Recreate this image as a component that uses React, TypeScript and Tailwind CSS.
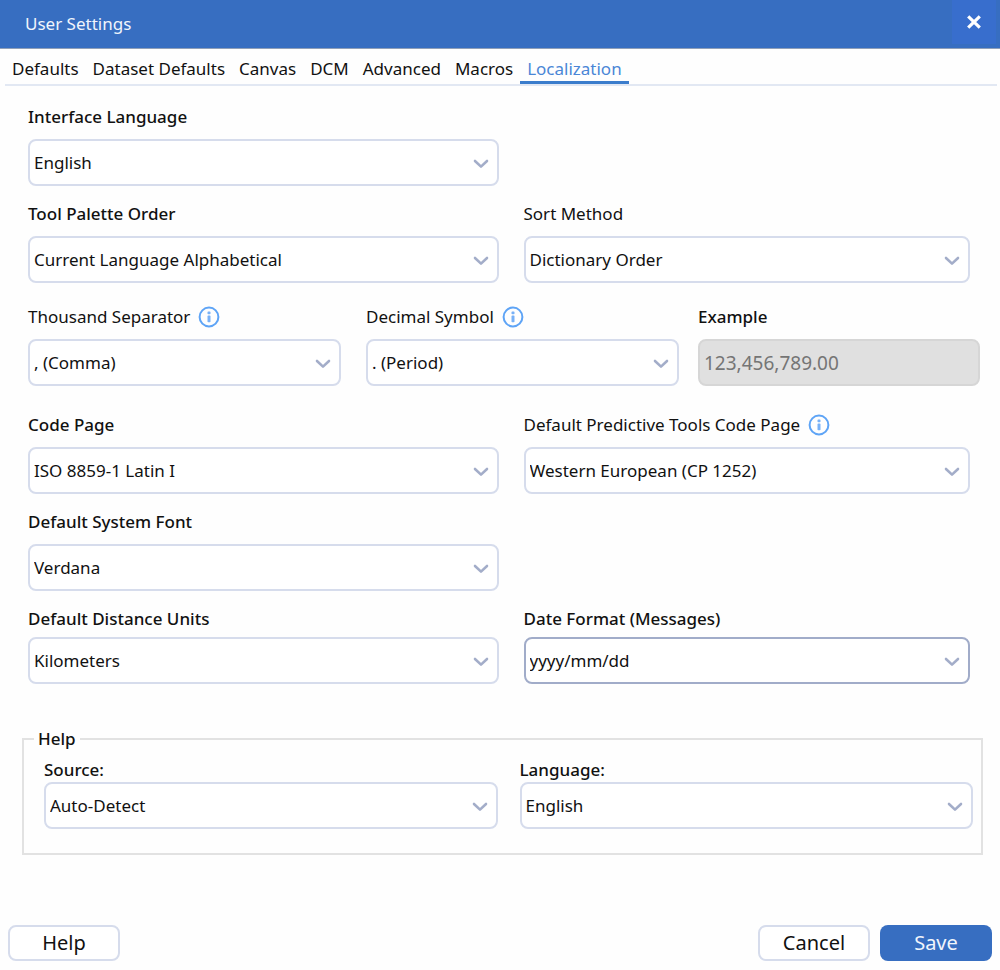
import React, { useId, useState } from "react";

const tabs = ["Defaults", "Dataset Defaults", "Canvas", "DCM", "Advanced", "Macros", "Localization"];

const InfoIcon = () => (
  <svg viewBox="0 0 22 22" className="h-[22px] w-[22px] shrink-0" fill="none" aria-hidden="true">
    <circle cx="11" cy="11" r="9.4" stroke="#5ea4f6" strokeWidth="2" />
    <rect x="9.5" y="5.6" width="3" height="2.6" rx="0.8" fill="#78b1f7" />
    <rect x="9.5" y="9.6" width="3" height="6.6" rx="0.8" fill="#78b1f7" />
  </svg>
);

const Chevron = () => (
  <svg
    viewBox="0 0 16 10"
    className="pointer-events-none absolute top-[20px] right-[10px] h-[10px] w-4"
    fill="none"
    aria-hidden="true"
  >
    <path d="M2 2 L8 7.6 L14 2" stroke="#a3adc9" strokeWidth="2.6" strokeLinecap="round" strokeLinejoin="round" />
  </svg>
);

type SelectFieldProps = {
  label: string;
  options: string[];
  info?: boolean;
  active?: boolean;
  medium?: boolean;
  gap?: string;
  className?: string;
};

const SelectField = ({ label, options, info, active, medium, gap = "gap-[10px]", className = "" }: SelectFieldProps) => {
  const id = useId();
  const [value, setValue] = useState(options[0]);

  return (
    <div className={`flex min-w-0 flex-col ${gap} ${className}`}>
      <div className="flex h-6 items-center gap-2">
        <label htmlFor={id} className={medium ? "font-medium" : ""}>
          {label}
        </label>
        {info && <InfoIcon />}
      </div>
      <div className="relative">
        <select
          id={id}
          value={value}
          onChange={(e) => setValue(e.target.value)}
          className={`h-[47px] w-full appearance-none rounded-lg border-2 bg-white pr-9 pl-1 ${
            active ? "border-[#a1acc9]" : "border-[#d6dcec]"
          }`}
        >
          {options.map((option) => (
            <option key={option}>{option}</option>
          ))}
        </select>
        <Chevron />
      </div>
    </div>
  );
};

const App = () => {
  const [activeTab, setActiveTab] = useState("Localization");

  return (
    <div className="flex min-h-screen flex-col bg-[#fefefe] font-['Noto_Sans',sans-serif] text-[17px] leading-6 text-[#111111]">
      {/* Title bar */}
      <header className="flex h-[49px] items-start justify-between border-b border-[#8f9fb8] bg-[#376ec1] pl-[25px] text-[#f0f5fc]">
        <h1 className="pt-3">User Settings</h1>
        <button type="button" aria-label="Close" className="mr-1 flex h-11 w-11 items-center justify-center bg-[#386ecd]">
          <svg viewBox="0 0 16 14" className="h-[14px] w-4" fill="none" aria-hidden="true">
            <path d="M2.2 1.4 L13.8 12.6 M13.8 1.4 L2.2 12.6" stroke="#ffffff" strokeWidth="3.2" />
          </svg>
        </button>
      </header>

      {/* Tabs */}
      <nav role="tablist" className="mr-[3px] ml-[5px] flex h-[37px] items-end border-b-2 border-[#e2e8f3]">
        {tabs.map((tab) => (
          <button
            key={tab}
            type="button"
            role="tab"
            aria-selected={tab === activeTab}
            onClick={() => setActiveTab(tab)}
            className={`h-[29px] border-b-[3px] px-[7px] pt-[2px] whitespace-nowrap ${
              tab === activeTab ? "border-[#3b7dcc] text-[#4a86d6]" : "border-transparent"
            }`}
          >
            {tab}
          </button>
        ))}
      </nav>

      <main className="flex-1 pt-[19px] pr-5 pl-[28px]">
        <div className="grid grid-cols-[470fr_446fr] gap-x-[25px] gap-y-4 pr-[10px]">
          <SelectField label="Interface Language" options={["English", "French", "German"]} medium />
          <div />
          <SelectField label="Tool Palette Order" options={["Current Language Alphabetical", "English Alphabetical"]} medium />
          <SelectField label="Sort Method" options={["Dictionary Order", "Unicode Order"]} />
        </div>

        <div className="mt-[22px] flex">
          <SelectField className="flex-[313]" label="Thousand Separator" options={[", (Comma)", ". (Period)", "(Space)"]} info />
          <SelectField className="ml-[25px] flex-[313]" label="Decimal Symbol" options={[". (Period)", ", (Comma)"]} info />
          <div className="ml-[19px] flex min-w-0 flex-[282] flex-col gap-[10px]">
            <label htmlFor="example" className="h-6 font-medium">
              Example
            </label>
            <input
              id="example"
              value="123,456,789.00"
              disabled
              className="h-[47px] w-full rounded-lg border-2 border-[#d6d6d6] bg-[#e0e0e0] pl-1 text-[19px] text-[#757575]"
            />
          </div>
        </div>

        <div className="mt-[27px] grid grid-cols-[470fr_446fr] gap-x-[25px] gap-y-4 pr-[10px]">
          <SelectField label="Code Page" options={["ISO 8859-1 Latin I", "Unicode UTF-8"]} medium />
          <SelectField label="Default Predictive Tools Code Page" options={["Western European (CP 1252)"]} info />
          <SelectField label="Default System Font" options={["Verdana", "Arial", "Tahoma"]} medium />
          <div />
          <SelectField label="Default Distance Units" options={["Kilometers", "Miles"]} medium gap="gap-[6px]" />
          <SelectField label="Date Format (Messages)" options={["yyyy/mm/dd", "mm/dd/yyyy"]} medium gap="gap-[6px]" active />
        </div>
      </main>

      {/* Help */}
      <fieldset className="mx-[22px] mr-[17px] mt-[42px] border-2 border-[#e2e2e2] pr-2 pb-[24px] pl-5">
        <legend className="-ml-[10px] px-1 font-medium">Help</legend>
        <div className="grid grid-cols-2 gap-x-[22px] pt-[7px]">
          <SelectField label="Source:" options={["Auto-Detect", "Online", "Offline"]} medium gap="gap-0" />
          <SelectField label="Language:" options={["English", "French", "German"]} medium gap="gap-0" />
        </div>
      </fieldset>

      {/* Actions */}
      <footer className="mt-[70px] flex gap-[10px] px-2 pb-[9px] text-[20px]">
        <button type="button" className="mr-auto h-9 w-28 rounded-lg border-2 border-[#d6dcec] bg-white">
          Help
        </button>
        <button type="button" className="h-9 w-28 rounded-lg border-2 border-[#d6dcec] bg-white">
          Cancel
        </button>
        <button type="button" className="h-9 w-28 rounded-lg bg-[#376ec1] text-[#f0f5fc]">
          Save
        </button>
      </footer>
    </div>
  );
};

export default App;
